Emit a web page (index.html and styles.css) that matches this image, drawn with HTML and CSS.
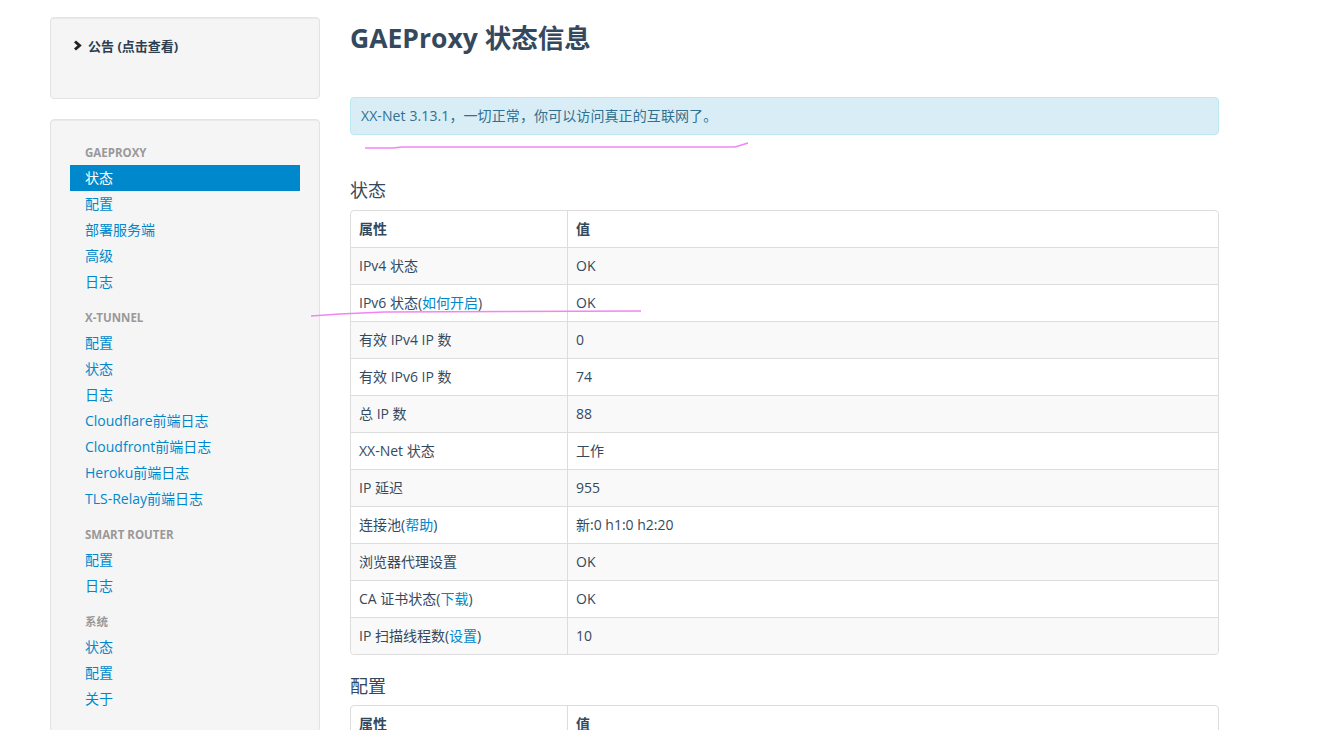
FILE: index.html
```html
<!DOCTYPE html>
<html lang="zh-CN">
<head>
<meta charset="utf-8">
<title>GAEProxy 状态信息</title>
<link rel="stylesheet" href="styles.css">
</head>
<body>
<div class="page">
  <aside class="sidebar">
    <div class="well notice">
      <div class="notice-title">
        <svg class="chev" width="9" height="11" viewBox="0 0 9 11"><polyline points="2,1.5 6.5,5.5 2,9.5" fill="none" stroke="#222" stroke-width="3"/></svg>
        <span>公告 (点击查看)</span>
      </div>
    </div>
    <div class="well navwell">
      <ul class="nav-list">
        <li class="nav-header">GAEProxy</li>
        <li class="active"><a href="#">状态</a></li>
        <li><a href="#">配置</a></li>
        <li><a href="#">部署服务端</a></li>
        <li><a href="#">高级</a></li>
        <li><a href="#">日志</a></li>
        <li class="nav-header">X-Tunnel</li>
        <li><a href="#">配置</a></li>
        <li><a href="#">状态</a></li>
        <li><a href="#">日志</a></li>
        <li><a href="#">Cloudflare前端日志</a></li>
        <li><a href="#">Cloudfront前端日志</a></li>
        <li><a href="#">Heroku前端日志</a></li>
        <li><a href="#">TLS-Relay前端日志</a></li>
        <li class="nav-header">Smart Router</li>
        <li><a href="#">配置</a></li>
        <li><a href="#">日志</a></li>
        <li class="nav-header">系统</li>
        <li><a href="#">状态</a></li>
        <li><a href="#">配置</a></li>
        <li><a href="#">关于</a></li>
      </ul>
    </div>
  </aside>
  <main class="main">
    <h1 class="title">GAEProxy 状态信息</h1>
    <div class="alert">XX-Net 3.13.1，一切正常，你可以访问真正的互联网了。</div>
    <h3 class="section first">状态</h3>
    <table class="tbl">
      <thead><tr><th class="c1">属性</th><th>值</th></tr></thead>
      <tbody>
        <tr><td class="c1">IPv4 状态</td><td>OK</td></tr>
        <tr><td class="c1">IPv6 状态(<a href="#">如何开启</a>)</td><td>OK</td></tr>
        <tr><td class="c1">有效 IPv4 IP 数</td><td>0</td></tr>
        <tr><td class="c1">有效 IPv6 IP 数</td><td>74</td></tr>
        <tr><td class="c1">总 IP 数</td><td>88</td></tr>
        <tr><td class="c1">XX-Net 状态</td><td>工作</td></tr>
        <tr><td class="c1">IP 延迟</td><td>955</td></tr>
        <tr><td class="c1">连接池(<a href="#">帮助</a>)</td><td>新:0 h1:0 h2:20</td></tr>
        <tr><td class="c1">浏览器代理设置</td><td>OK</td></tr>
        <tr><td class="c1">CA 证书状态(<a href="#">下载</a>)</td><td>OK</td></tr>
        <tr><td class="c1">IP 扫描线程数(<a href="#">设置</a>)</td><td>10</td></tr>
      </tbody>
    </table>
    <h3 class="section">配置</h3>
    <table class="tbl">
      <thead><tr><th class="c1">属性</th><th>值</th></tr></thead>
      <tbody>
        <tr><td class="c1">&nbsp;</td><td>&nbsp;</td></tr>
      </tbody>
    </table>
  </main>
</div>
<svg class="marks" width="1326" height="730" viewBox="0 0 1326 730">
  <path d="M365 148 L393 148 L402 147 L735 147 L748 143" fill="none" stroke="#f384f3" stroke-width="1.5"/>
  <path d="M311 316 L340 314 L384 312 L641 311" fill="none" stroke="#f384f3" stroke-width="1.5"/>
</svg>
</body>
</html>
```

FILE: styles.css
```css
html, body {
  margin: 0;
  padding: 0;
  background: #fff;
}
body {
  font-family: "Open Sans", "Noto Sans CJK SC", sans-serif;
  font-size: 14px;
  line-height: 20px;
  color: #34495e;
  overflow: hidden;
  height: 730px;
}
a {
  color: #0088cc;
  text-decoration: none;
}
.page {
  display: flex;
  align-items: flex-start;
  gap: 30px;
  padding: 17px 0 0 50px;
}
.sidebar {
  width: 270px;
  flex: none;
}
.well {
  background: #f5f5f5;
  border: 1px solid #e3e3e3;
  border-radius: 4px;
  box-shadow: inset 0 1px 1px rgba(0,0,0,0.05);
  padding: 19px;
  margin-bottom: 20px;
}
.notice {
  height: 42px;
}
.notice-title {
  display: flex;
  align-items: center;
  gap: 6px;
  margin-left: 3px;
  margin-top: -1px;
  font-size: 13px;
  font-weight: bold;
  color: #2c3e50;
}
.chev {
  display: block;
  margin-top: -1px;
}
.nav-list {
  list-style: none;
  margin: 0;
  padding: 0 15px;
}
.nav-list li a {
  display: block;
  margin: 0 -15px;
  padding: 3px 15px;
}
.nav-list li.active a {
  background: #0088cc;
  color: #fff;
}
.nav-header {
  padding: 4px 0 3px;
  font-size: 11.5px;
  line-height: 19px;
  font-weight: bold;
  color: #999;
  text-transform: uppercase;
}
.nav-list li + .nav-header {
  margin-top: 9px;
}
.main {
  width: 869px;
  flex: none;
}
.title {
  margin: 1px 0 0;
  font-size: 26.5px;
  line-height: 40px;
  font-weight: bold;
  color: #34495e;
}
.alert {
  margin-top: 39px;
  padding: 8px 10px;
  background: #d9edf7;
  border: 1px solid #bce8f1;
  border-radius: 4px;
  color: #31708f;
  letter-spacing: 0.1px;
}
.section {
  margin: 19px 0 7px;
  font-size: 18px;
  line-height: 24px;
  font-weight: normal;
  color: #34495e;
}
.section.first {
  margin-top: 43px;
  margin-bottom: 8px;
}
.tbl {
  width: 100%;
  border: 1px solid #ddd;
  border-radius: 4px;
  border-collapse: separate;
  border-spacing: 0;
}
.tbl th, .tbl td {
  padding: 8px;
  text-align: left;
  line-height: 20px;
  vertical-align: top;
}
.tbl th {
  font-weight: bold;
}
.tbl tbody td {
  border-top: 1px solid #ddd;
}
.tbl th + th, .tbl td + td {
  border-left: 1px solid #ddd;
}
.tbl .c1 {
  width: 200px;
}
.tbl tbody tr:nth-child(odd) td {
  background: #f9f9f9;
}
.tbl tbody tr:last-child td:first-child {
  border-bottom-left-radius: 4px;
}
.tbl tbody tr:last-child td:last-child {
  border-bottom-right-radius: 4px;
}
.marks {
  position: absolute;
  left: 0;
  top: 0;
  pointer-events: none;
}
```
